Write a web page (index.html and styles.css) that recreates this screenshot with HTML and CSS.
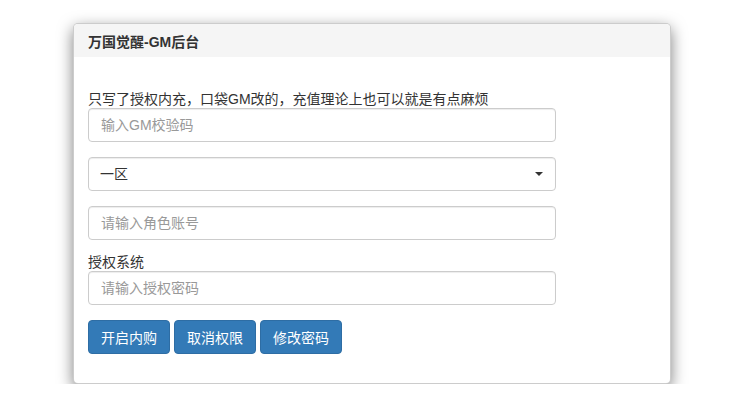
FILE: index.html
```html
<!DOCTYPE html>
<html lang="zh">
<head>
<meta charset="utf-8">
<title>万国觉醒-GM后台</title>
<link rel="stylesheet" href="styles.css">
</head>
<body>
<div class="card">
  <div class="card-header">万国觉醒-GM后台</div>
  <div class="card-body">
    <div class="label">只写了授权内充，口袋GM改的，充值理论上也可以就是有点麻烦</div>
    <input class="field" type="text" placeholder="输入GM校验码">
    <div class="select-wrap">
      <select class="field select">
        <option>一区</option>
      </select>
    </div>
    <input class="field field-before-label" type="text" placeholder="请输入角色账号">
    <div class="label">授权系统</div>
    <input class="field" type="password" placeholder="请输入授权密码">
    <div class="buttons">
      <button class="btn">开启内购</button>
      <button class="btn">取消权限</button>
      <button class="btn">修改密码</button>
    </div>
  </div>
</div>
</body>
</html>
```
FILE: styles.css
```css
* { box-sizing: border-box; }
html, body { margin: 0; padding: 0; background: #fff; }
body {
  font-family: "Liberation Sans", "Noto Sans CJK SC", sans-serif;
  font-size: 14px;
  color: #333;
  padding: 23px 0 0 73px;
}
.card {
  width: 598px;
  height: 361px;
  background: #fff;
  border: 1px solid rgba(0,0,0,0.2);
  border-radius: 5px;
  box-shadow: 0 5px 15px rgba(0,0,0,0.5);
  overflow: hidden;
}
.card-header {
  height: 33px;
  background: #f5f5f5;
  display: flex;
  align-items: center;
  padding: 0 14px;
  font-size: 14px;
  font-weight: bold;
  color: #333;
}
.card-body {
  padding: 33px 14px 15px;
  display: flex;
  flex-direction: column;
  align-items: flex-start;
}
.label {
  line-height: 18px;
  height: 18px;
  color: #333;
}
.field {
  display: block;
  width: 468px;
  height: 34px;
  padding: 6px 12px;
  font-family: inherit;
  font-size: 14px;
  color: #555;
  background: #fff;
  border: 1px solid #ccc;
  border-radius: 4px;
  box-shadow: inset 0 1px 1px rgba(0,0,0,0.075);
  margin-bottom: 15px;
  outline: none;
}
.field-before-label { margin-bottom: 13px; }
.field::placeholder { color: #999; }
.select-wrap { position: relative; }
.select {
  appearance: none;
  -webkit-appearance: none;
  color: #333;
  padding-left: 11px;
}
.select-wrap::after {
  content: "";
  position: absolute;
  right: 13px;
  top: 15px;
  width: 0;
  height: 0;
  border-left: 4px solid transparent;
  border-right: 4px solid transparent;
  border-top: 4px solid #333;
  pointer-events: none;
}
.buttons { display: flex; gap: 4px; }
.btn {
  width: 82px;
  height: 34px;
  padding: 6px 12px;
  font-family: inherit;
  font-size: 14px;
  color: #fff;
  background: #337ab7;
  border: 1px solid #2e6da4;
  border-radius: 4px;
  cursor: pointer;
}
```
